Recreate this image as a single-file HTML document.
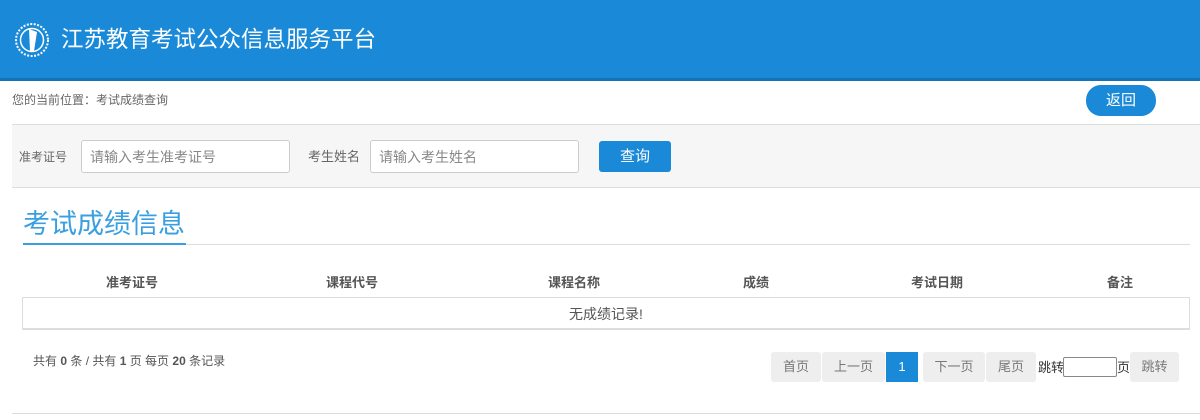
<!DOCTYPE html>
<html><head><meta charset="utf-8"><style>
*{margin:0;padding:0;box-sizing:border-box}
body{width:1200px;height:420px;background:#fff;font-family:"Liberation Sans","Noto Sans CJK SC",sans-serif;position:relative;overflow:hidden;color:#555}
.a{position:absolute;line-height:1}
.hd{left:0;top:0;width:1200px;height:78px;background:#1a8ad8}
.hd2{left:0;top:78px;width:1200px;height:3px;background:#1473b8}
.inp{background:#fff;border:1px solid #ccc;border-radius:3px;height:33px;font-size:14px;color:#888;padding:8px 8px;line-height:16px}
.pg{background:#eee;border-radius:3px;height:30px;top:352px;font-size:13px;color:#777;text-align:center;line-height:30px}
.th{top:276px;font-size:13px;color:#555;font-weight:bold;width:120px;margin-left:-60px;text-align:center}
</style></head><body>
<div class="a hd"></div><div class="a hd2"></div>
<svg class="a" style="left:12px;top:20px" width="40" height="40" viewBox="0 0 40 40"><circle cx="20" cy="20" r="16" fill="none" stroke="#fff" stroke-width="2" stroke-dasharray="2 1.5"/><circle cx="20" cy="20" r="11.5" fill="none" stroke="#fff" stroke-width="1.5"/><path d="M17 9 L25 12 L22 31 L18 31 Z" fill="#fff"/></svg>
<div class="a" style="left:61px;top:29px;font-size:22.5px;color:#fff">江苏教育考试公众信息服务平台</div>
<div class="a" style="left:12px;top:94px;font-size:12px;color:#666">您的当前位置：考试成绩查询</div>
<div class="a" style="left:1086px;top:85px;width:70px;height:31px;background:#1a8ad8;border-radius:15px;color:#fff;font-size:15px;text-align:center;line-height:31px">返回</div>
<div class="a" style="left:12px;top:124px;width:1188px;height:64px;background:#f6f6f6;border-top:1px solid #ddd;border-bottom:1px solid #ddd"></div>
<div class="a" style="left:19px;top:151px;font-size:12px;color:#666">准考证号</div>
<div class="a inp" style="left:81px;top:140px;width:209px">请输入考生准考证号</div>
<div class="a" style="left:308px;top:150px;font-size:13px;color:#666">考生姓名</div>
<div class="a inp" style="left:370px;top:140px;width:209px">请输入考生姓名</div>
<div class="a" style="left:599px;top:141px;width:72px;height:31px;background:#1a8ad8;border-radius:3px;color:#fff;font-size:15px;text-align:center;line-height:31px">查询</div>
<div class="a" style="left:23px;top:211px;font-size:27px;color:#3a9fe0">考试成绩信息</div>
<div class="a" style="left:23px;top:244px;width:1167px;height:1px;background:#ddd"></div>
<div class="a" style="left:23px;top:243px;width:163px;height:2px;background:#3a9fe0"></div>
<div class="a th" style="left:132px">准考证号</div>
<div class="a th" style="left:352px">课程代号</div>
<div class="a th" style="left:574px">课程名称</div>
<div class="a th" style="left:756px">成绩</div>
<div class="a th" style="left:937px">考试日期</div>
<div class="a th" style="left:1120px">备注</div>
<div class="a" style="left:22px;top:297px;width:1168px;height:33px;border:1px solid #ddd;border-bottom:2px solid #ddd;text-align:center;font-size:14px;line-height:32px;color:#555">无成绩记录!</div>
<div class="a" style="left:33px;top:355px;font-size:12px;color:#555">共有 <b>0</b> 条 / 共有 <b>1</b> 页 每页 <b>20</b> 条记录</div>
<div class="a pg" style="left:771px;width:50px">首页</div>
<div class="a pg" style="left:822px;width:63px">上一页</div>
<div class="a pg" style="left:886px;width:32px;background:#1a8ad8;color:#fff;border-radius:0">1</div>
<div class="a pg" style="left:923px;width:62px">下一页</div>
<div class="a pg" style="left:986px;width:50px">尾页</div>
<div class="a" style="left:1038px;top:361px;font-size:13px;color:#333">跳转</div>
<div class="a" style="left:1063px;top:357px;width:54px;height:20px;border:1px solid #888;border-radius:2px;background:#fff"></div>
<div class="a" style="left:1117px;top:361px;font-size:13px;color:#333">页</div>
<div class="a pg" style="left:1130px;width:49px">跳转</div>
<div class="a" style="left:12px;top:413px;width:1188px;height:1px;background:#ddd"></div>
</body></html>
